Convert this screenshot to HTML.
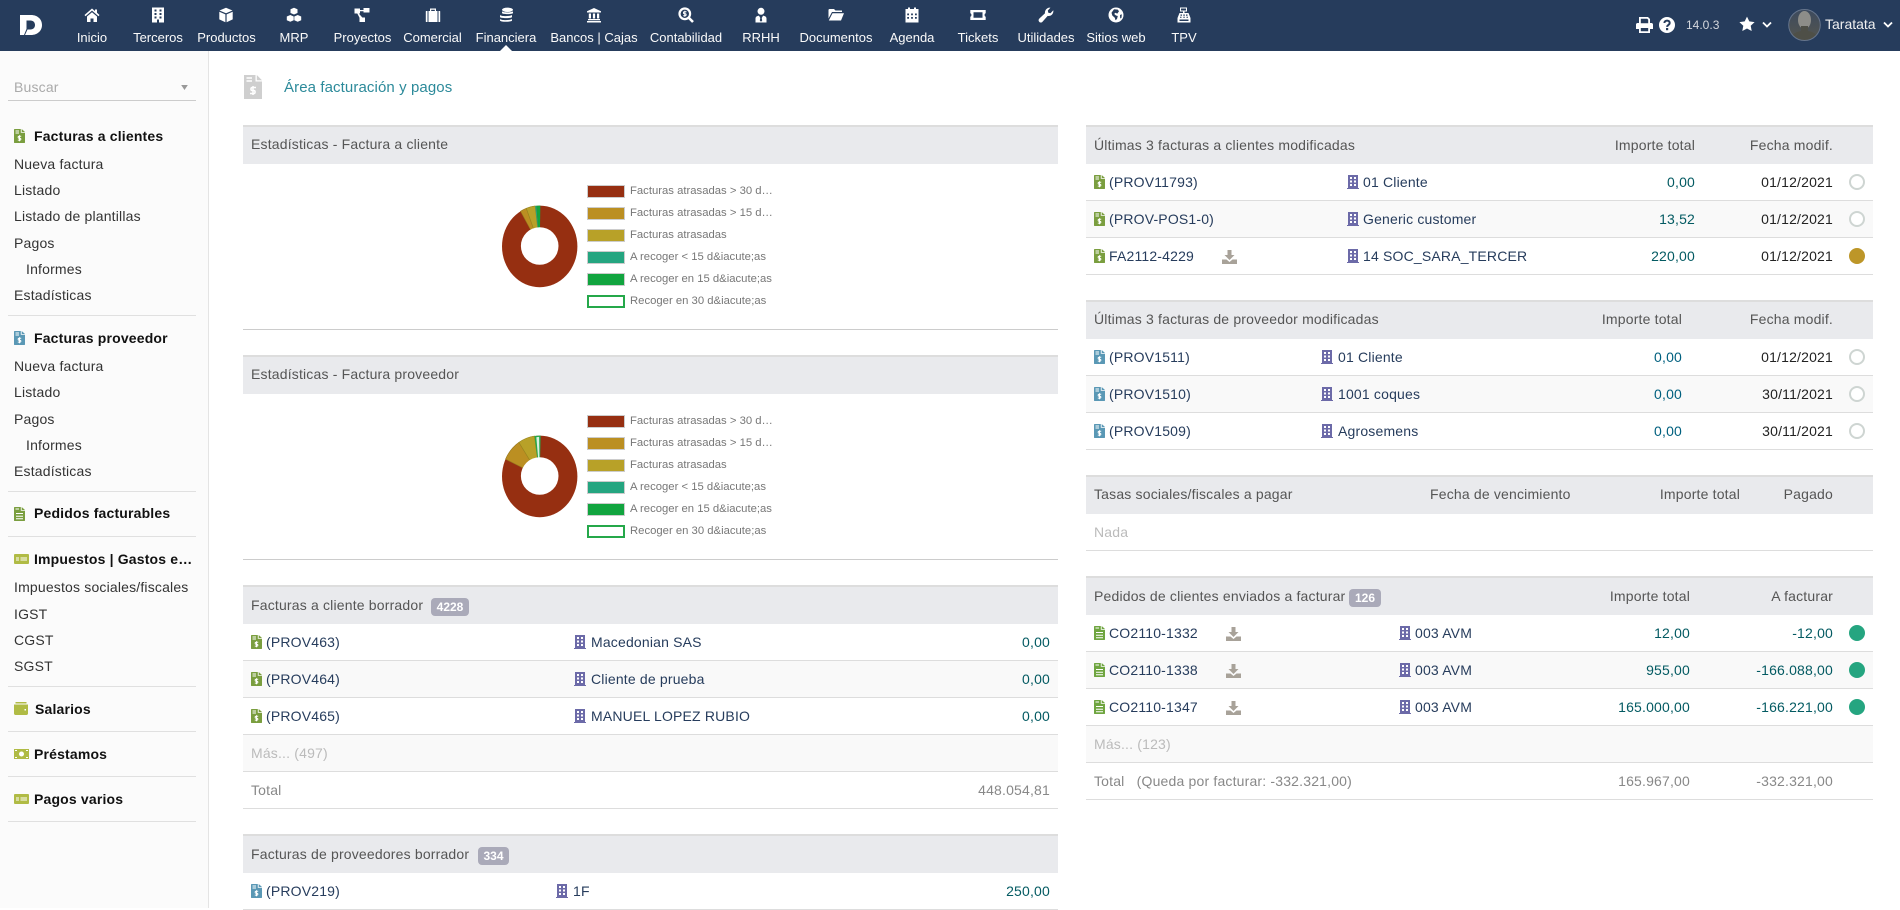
<!DOCTYPE html>
<html lang="es">
<head>
<meta charset="utf-8">
<title>Área facturación y pagos</title>
<style>
html,body{margin:0;padding:0;background:#fff}
body{position:relative;width:1900px;height:908px;overflow:hidden;font-family:"Liberation Sans",Arial,sans-serif;font-size:14px;color:#333}
.a{position:absolute;white-space:nowrap;line-height:20px;letter-spacing:.18px}
svg.a{line-height:0;display:block}
#top{position:absolute;left:0;top:0;width:1900px;height:51px;background:#263c5c}
.n{position:absolute;top:28px;width:110px;text-align:center;font-size:13px;line-height:20px;color:#fafafa;white-space:nowrap}
.ni{position:absolute;top:7px;width:16px;height:16px;fill:#fff}
#side{position:absolute;left:0;top:51px;width:208px;height:857px;background:#fbfbfb;border-right:1px solid #e4e4e4}
.b{font-weight:bold;color:#111;letter-spacing:.17px}
.s{color:#333}
.sl{position:absolute;left:8px;width:188px;height:1px;background:#e0e0e0}
.hd{position:absolute;height:39px;background:#e9eaed;border-top:2px solid #ddd;box-sizing:border-box}
.r{position:absolute;height:37px;border-bottom:1px solid #ddd;box-sizing:border-box;background:#fff}
.alt{background:#f9f9f9}
.L{left:243px;width:815px}
.R{left:1086px;width:787px}
.h{color:#555}
.l{color:#263c5c}
.m{color:#035a62}
.mb{color:#00607f}
.d{color:#222}
.g{color:#bbb}
.t{color:#888}
.bd{position:absolute;height:18px;border-radius:4px;background:#aaaab9;color:#fff;font-weight:bold;font-size:12px;line-height:18px;text-align:center}
.c{position:absolute;width:16px;height:16px;border-radius:50%;box-sizing:border-box}
.c0{border:2px solid #ced5d2;background:#fff}
.c1{background:#bd9628}
.c2{background:#25a580}
.sw{position:absolute;left:587px;width:38px;height:13px;box-sizing:border-box;border:1px solid #ccc}
.lg{font-size:11.3px;color:#777;left:630px;line-height:14px;letter-spacing:0;filter:blur(.25px)}
</style>
</head>
<body>
<svg width="0" height="0" style="position:absolute">
<defs>
<symbol id="inv" viewBox="0 0 11 14"><path d="M0 .8C0 .3.3 0 .8 0H6.8V3.8H11V13.2C11 13.7 10.7 14 10.2 14H.8C.3 14 0 13.7 0 13.2Z"/><path d="M7.7 0 11 3H7.7Z"/><path d="M1.5 2h3.5M1.5 4h3.5" stroke="#fff" stroke-width=".9"/><path d="M7.2 7.3H5C3.9 7.3 3.9 9.2 5 9.2H6C7.1 9.2 7.1 11.1 6 11.1H3.8M5.5 6.2V12.2" fill="none" stroke="#fff" stroke-width="1"/></symbol>
<symbol id="ord" viewBox="0 0 11 14"><path d="M0 .8C0 .3.3 0 .8 0H6.8V3.8H11V13.2C11 13.7 10.7 14 10.2 14H.8C.3 14 0 13.7 0 13.2Z"/><path d="M7.7 0 11 3H7.7Z"/><path d="M1.5 2h3.5M2 6.5h7M2 9.2h7M2 11.8h7" stroke="#fff" stroke-width="1"/></symbol>
<symbol id="co" viewBox="0 0 12 14"><path d="M1 0H11V13H12V14H0V13H1Z"/><path d="M3 2h2v2H3ZM7 2h2v2H7ZM3 5.5h2v2H3ZM7 5.5h2v2H7ZM3 9h2v2H3ZM7 9h2v2H7Z" fill="#fff"/></symbol>
<symbol id="dl" viewBox="0 0 15 14"><path d="M5.5 0H9.5V5H12.5L7.5 10 2.5 5H5.5Z"/><path d="M0 9.5H4.5L7.5 12 10.5 9.5H15V14H0Z"/></symbol>
</defs>
</svg>

<div id="top">
<svg class="a" style="left:20px;top:15px" width="22" height="20" viewBox="0 0 22 20"><path fill="#fff" fill-rule="evenodd" d="M0 0H11C17.5 0 22 4.2 22 10S17.5 20 11 20H5L7.5 14.5H10.5C13.2 14.5 15 12.6 15 10S13.2 5.5 10.5 5.5H6.5V14L4 20H0Z"/></svg>

<svg class="ni" style="left:84px" viewBox="0 0 16 16"><path d="M8 1.5 .5 8l1 1.2L8 3.6l6.5 5.6 1-1.2-2.5-2.2V2.5h-2v1.6ZM3 9.5 8 5.2l5 4.3V15H9.5v-3.5h-3V15H3Z"/></svg>
<svg class="ni" style="left:150px" viewBox="0 0 16 16"><path fill-rule="evenodd" d="M2 .5H14V15.500H2ZM4.500 2.500V4.500H6.500V2.500ZM9.500 2.500V4.500H11.500V2.500ZM4.500 6V8H6.500V6ZM9.500 6V8H11.500V6ZM4.500 9.500V11.500H6.500V9.500ZM9.500 9.500V11.500H11.500V9.500ZM7 12.500V15.500H9V12.500Z"/></svg>
<svg class="ni" style="left:218px" viewBox="0 0 16 16"><path d="M8 .8 14.500 3.500 8 6.300 1.500 3.500ZM1.300 4.800 7.400 7.400V15.200L1.300 12.400ZM14.700 4.800V12.400L8.600 15.200V7.400Z"/></svg>
<svg class="ni" style="left:286px" viewBox="0 0 16 16"><path d="M8 .8 11.500 2.300V6L8 7.500 4.500 6V2.300ZM4.300 8 7.700 9.500V13.300L4.300 14.800.8 13.300V9.500ZM11.700 8 15.200 9.500V13.300L11.700 14.800 8.300 13.300V9.500Z"/></svg>
<svg class="ni" style="left:354px" viewBox="0 0 16 16"><path d="M.5 1.500H6V6.500H4.800L8.300 10.500H11V15H5.500V10.800L3.300 6.500H.5ZM9.500 1H15.500V5.500H9.500ZM6 3H9.500V4.200H6Z"/></svg>
<svg class="ni" style="left:425px" viewBox="0 0 16 16"><path fill-rule="evenodd" d="M5 4V1.500H11V4H12.500V15H3.500V4ZM6.200 2.700V4H9.800V2.700ZM.8 4.500C.8 4.200 1 4 1.300 4H2.500V15H1.300C1 15 .8 14.800 .8 14.500ZM13.500 4H14.700C15 4 15.200 4.200 15.200 4.500V14.500C15.200 14.800 15 15 14.700 15H13.500Z"/></svg>
<svg class="ni" style="left:498px" viewBox="0 0 16 16"><ellipse cx="9.500" cy="2.800" rx="5.500" ry="2.200"/><path d="M4 4.300C5 5.800 14 5.800 15 4.300V6C15 7.500 4 7.500 4 6Z"/><path d="M2 8C3 9.500 12 9.500 14 8V10C14 11.500 2 11.500 2 10Z"/><path d="M2 12C3 13.500 12 13.500 14 12V13.500C14 15.200 2 15.200 2 13.500Z"/></svg>
<svg class="ni" style="left:586px" viewBox="0 0 16 16"><path d="M8 1 15 4.300V5.500H1V4.300ZM2.800 6.500H5V11.500H2.800ZM6.900 6.500H9.100V11.500H6.900ZM11 6.500H13.200V11.500H11ZM2 12H14V13.300H2ZM1 14H15V15.500H1Z"/></svg>
<svg class="ni" style="left:678px" viewBox="0 0 16 16"><circle cx="6.800" cy="6.800" r="5.300" fill="none" stroke="#fff" stroke-width="2.200"/><path d="M11 11 15 15" stroke="#fff" stroke-width="2.600"/><path d="M8.500 4.800H6.300C5.200 4.800 5.200 6.700 6.300 6.700H7.300C8.400 6.700 8.400 8.700 7.300 8.700H5.200M6.800 3.800V9.800" fill="none" stroke="#fff" stroke-width="1"/></svg>
<svg class="ni" style="left:753px" viewBox="0 0 16 16"><circle cx="8" cy="4.300" r="3.500"/><path d="M2.500 15.500V11.500C2.500 9.800 4 8.700 6 8.700L7.300 11 6.800 13.500 8 14.800 9.200 13.500 8.700 11 10 8.700C12 8.700 13.500 9.800 13.500 11.500V15.500Z"/></svg>
<svg class="ni" style="left:828px" viewBox="0 0 16 16"><path d="M.5 3C.5 2.500.9 2 1.500 2H6L7.500 3.500H14V5H4L.5 11.500ZM4.500 6.200H16L13 13.500H.8Z"/></svg>
<svg class="ni" style="left:904px" viewBox="0 0 16 16"><path fill-rule="evenodd" d="M4 .5H6V2H10V.5H12V2H14.500V15.500H1.500V2H4ZM3.200 6.500V8.300H5V6.500ZM7.100 6.500V8.300H8.900V6.500ZM11 6.500V8.300H12.800V6.500ZM3.200 10V11.800H5V10ZM7.100 10V11.800H8.900V10ZM11 10V11.800H12.800V10Z"/></svg>
<svg class="ni" style="left:970px" viewBox="0 0 16 16"><path fill-rule="evenodd" d="M.3 3H15.700V6.300C14.200 6.500 14.200 9.500 15.700 9.700V13H.3V9.700C1.800 9.500 1.800 6.500.3 6.300ZM3.500 5.300V10.700H12.500V5.300Z"/></svg>
<svg class="ni" style="left:1038px" viewBox="0 0 16 16"><path d="M15.300 3.300C15.700 5.500 14.500 8 12.200 8.800 11.300 9.100 10.500 9.100 9.700 8.900L4.500 14.800C3.600 15.800 2 15.800 1.200 14.800.3 13.900.4 12.400 1.400 11.500L7 6.300C6.700 4.600 7.500 2.300 9.500 1.200 10.400.7 11.400.5 12.400.7L9.800 3.500 10.300 5.700 12.500 6.200Z"/></svg>
<svg class="ni" style="left:1108px" viewBox="0 0 16 16"><circle cx="8" cy="8" r="7.500"/><path fill="#263c5c" d="M6 2.300 9.800 2.600 11 4.300 9.300 6.600 7.300 5.800 6.200 7 8 8.500 9.800 9 9 12 7.500 13.300 6.800 10.800 4.300 8.500 3.500 5.700ZM12 8 13.800 7.300 13.500 10.800 12.200 11.500Z"/></svg>
<svg class="ni" style="left:1176px" viewBox="0 0 16 16"><path fill-rule="evenodd" d="M4 .5H11V4.500H8.500V6H12.500L14.500 11V15.500H1.500V11L3.500 6H7V4.500H4ZM5 1.500V3.500H10V1.500ZM4.500 7.500V8.700H6V7.500ZM7.300 7.500V8.700H8.800V7.500ZM10 7.500V8.700H11.500V7.500ZM4 9.700V10.800H5.500V9.700ZM7.300 9.700V10.800H8.800V9.700ZM10.500 9.700V10.800H12V9.700ZM3.500 12.500V14H12.500V12.500Z"/></svg>

<div class="n" style="left:37px">Inicio</div>
<div class="n" style="left:103px">Terceros</div>
<div class="n" style="left:171.500px">Productos</div>
<div class="n" style="left:239px">MRP</div>
<div class="n" style="left:307.500px">Proyectos</div>
<div class="n" style="left:377.500px">Comercial</div>
<div class="n" style="left:451px">Financiera</div>
<div class="n" style="left:539px">Bancos | Cajas</div>
<div class="n" style="left:631px">Contabilidad</div>
<div class="n" style="left:706px">RRHH</div>
<div class="n" style="left:781px">Documentos</div>
<div class="n" style="left:857px">Agenda</div>
<div class="n" style="left:923px">Tickets</div>
<div class="n" style="left:991px">Utilidades</div>
<div class="n" style="left:1061px">Sitios web</div>
<div class="n" style="left:1129px">TPV</div>

<svg class="a" style="left:500px;top:45px" width="12" height="6" viewBox="0 0 12 6"><path d="M0 6 6 0 12 6Z" fill="#fff"/></svg>

<svg class="a" style="left:1636px;top:17px" width="17" height="16" viewBox="0 0 17 16"><path fill="#fff" fill-rule="evenodd" d="M3 0H12L14 2V6H15.500C16.300 6 17 6.700 17 7.500V12H14V16H3V12H0V7.500C0 6.700.7 6 1.500 6H3ZM4.800 1.800V6.200H12.200V2.800L11.200 1.800ZM4.800 11V14.200H12.200V11Z"/></svg>
<svg class="a" style="left:1659px;top:17px" width="16" height="16" viewBox="0 0 16 16"><circle cx="8" cy="8" r="8" fill="#fff"/><path d="M5.400 6C5.500 2.800 10.700 2.800 10.700 6C10.700 8 8.100 7.900 8.100 9.900" fill="none" stroke="#263c5c" stroke-width="2"/><rect x="7" y="11" width="2.200" height="2.200" fill="#263c5c"/></svg>
<div class="a" style="left:1686px;top:15px;font-size:12px;color:#d5d8de;letter-spacing:0">14.0.3</div>
<svg class="a" style="left:1739px;top:16px" width="16" height="16" viewBox="0 0 16 16"><path fill="#fff" d="M8 .6 10.300 5.400 15.600 6.100 11.700 9.800 12.700 15 8 12.500 3.300 15 4.300 9.800.4 6.100 5.700 5.400Z"/></svg>
<svg class="a" style="left:1762px;top:21px" width="10" height="8" viewBox="0 0 10 8"><path d="M1 1.500 5 5.500 9 1.500" fill="none" stroke="#fff" stroke-width="1.800"/></svg>
<svg class="a" style="left:1788px;top:9px" width="33" height="32" viewBox="0 0 33 32"><defs><clipPath id="av"><ellipse cx="16.500" cy="16" rx="15.800" ry="15.500"/></clipPath><linearGradient id="avg" x1="0" y1="0" x2="0" y2="1"><stop offset="0" stop-color="#3c4a5e"/><stop offset="1" stop-color="#55564f"/></linearGradient></defs><g clip-path="url(#av)"><rect width="33" height="32" fill="url(#avg)"/><ellipse cx="16.500" cy="11" rx="6.500" ry="9" fill="#8d8d89"/><path d="M13 17H20V22C25 23 30 25 31 32H2C3 25 8 23 13 22Z" fill="#4e4f47"/></g><ellipse cx="16.500" cy="16" rx="15.800" ry="15.500" fill="none" stroke="#66758c"/></svg>
<div class="a" style="left:1825px;top:14px;font-size:14px;color:#f0f0f0;letter-spacing:0">Taratata</div>
<svg class="a" style="left:1883px;top:21px" width="10" height="8" viewBox="0 0 10 8"><path d="M1 1.500 5 5.500 9 1.500" fill="none" stroke="#fff" stroke-width="1.800"/></svg>
</div>

<div id="side"></div>
<div class="a" style="left:14px;top:77px;color:#aaa">Buscar</div>
<svg class="a" style="left:181px;top:85px" width="7" height="5" viewBox="0 0 8 6"><path d="M0 0H8L4 6Z" fill="#999"/></svg>
<div class="a" style="left:8px;top:100px;width:188px;height:1px;background:#ccc"></div>

<svg class="a" style="left:14px;top:129px;fill:#7a9e3f" width="11" height="14"><use href="#inv"/></svg>
<div class="a b" style="left:34px;top:126px">Facturas a clientes</div>
<div class="a s" style="left:14px;top:154px">Nueva factura</div>
<div class="a s" style="left:14px;top:180px">Listado</div>
<div class="a s" style="left:14px;top:206px">Listado de plantillas</div>
<div class="a s" style="left:14px;top:233px">Pagos</div>
<div class="a s" style="left:26px;top:259px">Informes</div>
<div class="a s" style="left:14px;top:285px">Estadísticas</div>
<div class="sl" style="top:315px"></div>

<svg class="a" style="left:14px;top:331px;fill:#5a98b5" width="11" height="14"><use href="#inv"/></svg>
<div class="a b" style="left:34px;top:328px">Facturas proveedor</div>
<div class="a s" style="left:14px;top:356px">Nueva factura</div>
<div class="a s" style="left:14px;top:382px">Listado</div>
<div class="a s" style="left:14px;top:409px">Pagos</div>
<div class="a s" style="left:26px;top:435px">Informes</div>
<div class="a s" style="left:14px;top:461px">Estadísticas</div>
<div class="sl" style="top:491px"></div>

<svg class="a" style="left:14px;top:507px;fill:#7a9e3f" width="11" height="14"><use href="#ord"/></svg>
<div class="a b" style="left:34px;top:503px">Pedidos facturables</div>
<div class="sl" style="top:536px"></div>

<svg class="a" style="left:14px;top:554px" width="15" height="10" viewBox="0 0 15 10"><rect width="15" height="10" rx="1" fill="#b0bb45"/><path d="M2 4h3M2 6h3M6.500 4H13M6.500 6H13" stroke="#fff" stroke-width="1"/></svg>
<div class="a b" style="left:34px;top:549px">Impuestos | Gastos e…</div>
<div class="a s" style="left:14px;top:577px">Impuestos sociales/fiscales</div>
<div class="a s" style="left:14px;top:604px">IGST</div>
<div class="a s" style="left:14px;top:630px">CGST</div>
<div class="a s" style="left:14px;top:656px">SGST</div>
<div class="sl" style="top:686px"></div>

<svg class="a" style="left:14px;top:702px" width="14" height="13" viewBox="0 0 14 13"><path d="M1.500 0H12.500V1.500H1.500ZM0 2.500H14V11.500C14 12.300 13.300 13 12.500 13H1.500C.7 13 0 12.300 0 11.500Z" fill="#b0bb45"/><rect x="10.500" y="7" width="1.500" height="1.500" fill="#fff"/></svg>
<div class="a b" style="left:35px;top:699px">Salarios</div>
<div class="sl" style="top:731px"></div>

<svg class="a" style="left:14px;top:749px" width="15" height="10" viewBox="0 0 15 10"><rect width="15" height="10" fill="#b0bb45"/><circle cx="7.500" cy="5" r="2.500" fill="#fff"/><path d="M1 1.500H3M12 1.500H14M1 8.500H3M12 8.500H14" stroke="#fff"/></svg>
<div class="a b" style="left:34px;top:744px">Préstamos</div>
<div class="sl" style="top:776px"></div>

<svg class="a" style="left:14px;top:794px" width="15" height="10" viewBox="0 0 15 10"><rect width="15" height="10" rx="1" fill="#b0bb45"/><path d="M2 4h3M2 6h3M6.500 4H13M6.500 6H13" stroke="#fff" stroke-width="1"/></svg>
<div class="a b" style="left:34px;top:789px">Pagos varios</div>
<div class="sl" style="top:821px"></div>

<svg class="a" style="left:244px;top:75px" width="18" height="24" viewBox="0 0 18 24"><path fill="#cfcfcf" d="M0 0H11.500V6.500H18V24H0Z"/><path fill="#cfcfcf" d="M12.800 0 18 5.200H12.800Z"/><path d="M2.500 3H8M2.500 6H8" stroke="#fff" stroke-width="1.500"/><path d="M12 12.500H8.300C6.500 12.500 6.500 15.500 8.300 15.500H9.800C11.500 15.500 11.500 18.500 9.800 18.500H6M9 11V20" fill="none" stroke="#fff" stroke-width="1.500"/></svg>
<div class="a" style="left:284px;top:78px;font-size:15px;color:#2c8a9a;letter-spacing:.1px">Área facturación y pagos</div>

<!-- LEFT 1 -->
<div class="hd L" style="top:125px"></div>
<div class="a h" style="left:251px;top:134px">Estadísticas - Factura a cliente</div>
<div class="a L" style="top:329px;height:1px;background:#ccc"></div>
<svg class="a" style="left:480px;top:170px" width="160" height="140" viewBox="480 170 160 140">
<g transform="translate(539.700 246.400) scale(37.700 40.800)">
<circle r="1" fill="#962f11"/>
<path d="M0 0L-.509 -.861A1 1 0 0 1 -.355 -.935Z" fill="#bb8f22" stroke="#97781f" stroke-width=".6" vector-effect="non-scaling-stroke"/>
<path d="M0 0L-.355 -.935A1 1 0 0 1 -.122 -.9925Z" fill="#b8a128" stroke="#97851f" stroke-width=".6" vector-effect="non-scaling-stroke"/>
<path d="M0 0L-.122 -.9925A1 1 0 0 1 -.087 -.996Z" fill="#25a580"/>
<path d="M0 0L-.087 -.996A1 1 0 0 1 .0175 -.9998Z" fill="#12a53e"/>
</g>
<circle cx="539.700" cy="246" r="18.800" fill="#fff"/>
</svg>
<div class="sw" style="top:185px;background:#962f11"></div>
<div class="sw" style="top:207px;background:#bb8f22"></div>
<div class="sw" style="top:229px;background:#b8a128"></div>
<div class="sw" style="top:251px;background:#25a580"></div>
<div class="sw" style="top:273px;background:#11a43f"></div>
<div class="sw" style="top:295px;background:#fff;border:2px solid #25a84a"></div>
<div class="a lg" style="top:184px">Facturas atrasadas &gt; 30 d…</div>
<div class="a lg" style="top:206px">Facturas atrasadas &gt; 15 d…</div>
<div class="a lg" style="top:228px">Facturas atrasadas</div>
<div class="a lg" style="top:250px">A recoger &lt; 15 d&amp;iacute;as</div>
<div class="a lg" style="top:272px">A recoger en 15 d&amp;iacute;as</div>
<div class="a lg" style="top:294px">Recoger en 30 d&amp;iacute;as</div>

<!-- LEFT 2 -->
<div class="hd L" style="top:355px"></div>
<div class="a h" style="left:251px;top:364px">Estadísticas - Factura proveedor</div>
<div class="a L" style="top:559px;height:1px;background:#ccc"></div>
<svg class="a" style="left:480px;top:400px" width="160" height="140" viewBox="480 400 160 140">
<g transform="translate(539.700 476.400) scale(37.700 40.800)">
<circle r="1" fill="#962f11"/>
<path d="M0 0L-.906 -.423A1 1 0 0 1 -.552 -.834Z" fill="#bb8f22" stroke="#97781f" stroke-width=".6" vector-effect="non-scaling-stroke"/>
<path d="M0 0L-.552 -.834A1 1 0 0 1 -.139 -.990Z" fill="#b8a128" stroke="#97851f" stroke-width=".6" vector-effect="non-scaling-stroke"/>
<path d="M0 0L-.139 -.990A1 1 0 0 1 .026 -.9997Z" fill="#25a84a"/>
<path d="M0 0L-.09 -.96A1 1 0 0 1 -.015 -.97Z" fill="#d8efdf"/>
</g>
<circle cx="539.700" cy="476" r="18.800" fill="#fff"/>
</svg>
<div class="sw" style="top:415px;background:#962f11"></div>
<div class="sw" style="top:437px;background:#bb8f22"></div>
<div class="sw" style="top:459px;background:#b8a128"></div>
<div class="sw" style="top:481px;background:#25a580"></div>
<div class="sw" style="top:503px;background:#11a43f"></div>
<div class="sw" style="top:525px;background:#fff;border:2px solid #25a84a"></div>
<div class="a lg" style="top:414px">Facturas atrasadas &gt; 30 d…</div>
<div class="a lg" style="top:436px">Facturas atrasadas &gt; 15 d…</div>
<div class="a lg" style="top:458px">Facturas atrasadas</div>
<div class="a lg" style="top:480px">A recoger &lt; 15 d&amp;iacute;as</div>
<div class="a lg" style="top:502px">A recoger en 15 d&amp;iacute;as</div>
<div class="a lg" style="top:524px">Recoger en 30 d&amp;iacute;as</div>

<!-- LEFT 3 -->
<div class="hd L" style="top:585px"></div>
<div class="a h" style="left:251px;top:595px">Facturas a cliente borrador</div>
<div class="bd" style="left:431px;top:598px;width:38px">4228</div>
<div class="r L" style="top:624px"></div>
<div class="r L alt" style="top:661px"></div>
<div class="r L" style="top:698px"></div>
<div class="r L alt" style="top:735px"></div>
<div class="r L" style="top:772px"></div>
<svg class="a" style="left:251px;top:635px;fill:#7a9e3f" width="11" height="14"><use href="#inv"/></svg>
<svg class="a" style="left:251px;top:672px;fill:#7a9e3f" width="11" height="14"><use href="#inv"/></svg>
<svg class="a" style="left:251px;top:709px;fill:#7a9e3f" width="11" height="14"><use href="#inv"/></svg>
<div class="a l" style="left:266px;top:632px">(PROV463)</div>
<div class="a l" style="left:266px;top:669px">(PROV464)</div>
<div class="a l" style="left:266px;top:706px">(PROV465)</div>
<svg class="a" style="left:574px;top:635px;fill:#6c6aa8" width="12" height="14"><use href="#co"/></svg>
<svg class="a" style="left:574px;top:672px;fill:#6c6aa8" width="12" height="14"><use href="#co"/></svg>
<svg class="a" style="left:574px;top:709px;fill:#6c6aa8" width="12" height="14"><use href="#co"/></svg>
<div class="a l" style="left:591px;top:632px">Macedonian SAS</div>
<div class="a l" style="left:591px;top:669px">Cliente de prueba</div>
<div class="a l" style="left:591px;top:706px">MANUEL LOPEZ RUBIO</div>
<div class="a m" style="right:850px;top:632px">0,00</div>
<div class="a m" style="right:850px;top:669px">0,00</div>
<div class="a m" style="right:850px;top:706px">0,00</div>
<div class="a g" style="left:251px;top:743px">Más... (497)</div>
<div class="a t" style="left:251px;top:780px">Total</div>
<div class="a t" style="right:850px;top:780px">448.054,81</div>

<!-- LEFT 4 -->
<div class="hd L" style="top:834px"></div>
<div class="a h" style="left:251px;top:844px">Facturas de proveedores borrador</div>
<div class="bd" style="left:478px;top:847px;width:31px">334</div>
<div class="r L" style="top:873px"></div>
<svg class="a" style="left:251px;top:884px;fill:#5a98b5" width="11" height="14"><use href="#inv"/></svg>
<div class="a l" style="left:266px;top:881px">(PROV219)</div>
<svg class="a" style="left:556px;top:884px;fill:#6c6aa8" width="12" height="14"><use href="#co"/></svg>
<div class="a l" style="left:573px;top:881px">1F</div>
<div class="a m" style="right:850px;top:881px">250,00</div>

<!-- RIGHT 1 -->
<div class="hd R" style="top:125px"></div>
<div class="a h" style="left:1094px;top:135px">Últimas 3 facturas a clientes modificadas</div>
<div class="a h" style="right:205px;top:135px">Importe total</div>
<div class="a h" style="right:67px;top:135px">Fecha modif.</div>
<div class="r R" style="top:164px"></div>
<div class="r R alt" style="top:201px"></div>
<div class="r R" style="top:238px"></div>
<svg class="a" style="left:1094px;top:175px;fill:#7a9e3f" width="11" height="14"><use href="#inv"/></svg>
<svg class="a" style="left:1094px;top:212px;fill:#7a9e3f" width="11" height="14"><use href="#inv"/></svg>
<svg class="a" style="left:1094px;top:249px;fill:#7a9e3f" width="11" height="14"><use href="#inv"/></svg>
<div class="a l" style="left:1109px;top:172px">(PROV11793)</div>
<div class="a l" style="left:1109px;top:209px">(PROV-POS1-0)</div>
<div class="a l" style="left:1109px;top:246px">FA2112-4229</div>
<svg class="a" style="left:1222px;top:250px;fill:#a8a299" width="15" height="14"><use href="#dl"/></svg>
<svg class="a" style="left:1347px;top:175px;fill:#6c6aa8" width="12" height="14"><use href="#co"/></svg>
<svg class="a" style="left:1347px;top:212px;fill:#6c6aa8" width="12" height="14"><use href="#co"/></svg>
<svg class="a" style="left:1347px;top:249px;fill:#6c6aa8" width="12" height="14"><use href="#co"/></svg>
<div class="a l" style="left:1363px;top:172px">01 Cliente</div>
<div class="a l" style="left:1363px;top:209px">Generic customer</div>
<div class="a l" style="left:1363px;top:246px">14 SOC_SARA_TERCER</div>
<div class="a m" style="right:205px;top:172px">0,00</div>
<div class="a m" style="right:205px;top:209px">13,52</div>
<div class="a m" style="right:205px;top:246px">220,00</div>
<div class="a d" style="right:67px;top:172px">01/12/2021</div>
<div class="a d" style="right:67px;top:209px">01/12/2021</div>
<div class="a d" style="right:67px;top:246px">01/12/2021</div>
<div class="c c0" style="left:1849px;top:174px"></div>
<div class="c c0" style="left:1849px;top:211px"></div>
<div class="c c1" style="left:1849px;top:248px"></div>

<!-- RIGHT 2 -->
<div class="hd R" style="top:300px"></div>
<div class="a h" style="left:1094px;top:309px">Últimas 3 facturas de proveedor modificadas</div>
<div class="a h" style="right:218px;top:309px">Importe total</div>
<div class="a h" style="right:67px;top:309px">Fecha modif.</div>
<div class="r R" style="top:339px"></div>
<div class="r R alt" style="top:376px"></div>
<div class="r R" style="top:413px"></div>
<svg class="a" style="left:1094px;top:350px;fill:#5a98b5" width="11" height="14"><use href="#inv"/></svg>
<svg class="a" style="left:1094px;top:387px;fill:#5a98b5" width="11" height="14"><use href="#inv"/></svg>
<svg class="a" style="left:1094px;top:424px;fill:#5a98b5" width="11" height="14"><use href="#inv"/></svg>
<div class="a l" style="left:1109px;top:347px">(PROV1511)</div>
<div class="a l" style="left:1109px;top:384px">(PROV1510)</div>
<div class="a l" style="left:1109px;top:421px">(PROV1509)</div>
<svg class="a" style="left:1321px;top:350px;fill:#6c6aa8" width="12" height="14"><use href="#co"/></svg>
<svg class="a" style="left:1321px;top:387px;fill:#6c6aa8" width="12" height="14"><use href="#co"/></svg>
<svg class="a" style="left:1321px;top:424px;fill:#6c6aa8" width="12" height="14"><use href="#co"/></svg>
<div class="a l" style="left:1338px;top:347px">01 Cliente</div>
<div class="a l" style="left:1338px;top:384px">1001 coques</div>
<div class="a l" style="left:1338px;top:421px">Agrosemens</div>
<div class="a mb" style="right:218px;top:347px">0,00</div>
<div class="a mb" style="right:218px;top:384px">0,00</div>
<div class="a mb" style="right:218px;top:421px">0,00</div>
<div class="a d" style="right:67px;top:347px">01/12/2021</div>
<div class="a d" style="right:67px;top:384px">30/11/2021</div>
<div class="a d" style="right:67px;top:421px">30/11/2021</div>
<div class="c c0" style="left:1849px;top:349px"></div>
<div class="c c0" style="left:1849px;top:386px"></div>
<div class="c c0" style="left:1849px;top:423px"></div>

<!-- RIGHT 3 -->
<div class="hd R" style="top:475px"></div>
<div class="a h" style="left:1094px;top:484px">Tasas sociales/fiscales a pagar</div>
<div class="a h" style="left:1430px;top:484px">Fecha de vencimiento</div>
<div class="a h" style="right:160px;top:484px">Importe total</div>
<div class="a h" style="right:67px;top:484px">Pagado</div>
<div class="r R" style="top:514px"></div>
<div class="a g" style="left:1094px;top:522px">Nada</div>

<!-- RIGHT 4 -->
<div class="hd R" style="top:576px"></div>
<div class="a h" style="left:1094px;top:586px">Pedidos de clientes enviados a facturar</div>
<div class="bd" style="left:1349px;top:589px;width:32px">126</div>
<div class="a h" style="right:210px;top:586px">Importe total</div>
<div class="a h" style="right:67px;top:586px">A facturar</div>
<div class="r R" style="top:615px"></div>
<div class="r R alt" style="top:652px"></div>
<div class="r R" style="top:689px"></div>
<div class="r R alt" style="top:726px"></div>
<div class="r R" style="top:763px"></div>
<svg class="a" style="left:1094px;top:626px;fill:#6fa540" width="11" height="14"><use href="#ord"/></svg>
<svg class="a" style="left:1094px;top:663px;fill:#6fa540" width="11" height="14"><use href="#ord"/></svg>
<svg class="a" style="left:1094px;top:700px;fill:#6fa540" width="11" height="14"><use href="#ord"/></svg>
<div class="a l" style="left:1109px;top:623px">CO2110-1332</div>
<div class="a l" style="left:1109px;top:660px">CO2110-1338</div>
<div class="a l" style="left:1109px;top:697px">CO2110-1347</div>
<svg class="a" style="left:1226px;top:627px;fill:#a8a299" width="15" height="14"><use href="#dl"/></svg>
<svg class="a" style="left:1226px;top:664px;fill:#a8a299" width="15" height="14"><use href="#dl"/></svg>
<svg class="a" style="left:1226px;top:701px;fill:#a8a299" width="15" height="14"><use href="#dl"/></svg>
<svg class="a" style="left:1399px;top:626px;fill:#6c6aa8" width="12" height="14"><use href="#co"/></svg>
<svg class="a" style="left:1399px;top:663px;fill:#6c6aa8" width="12" height="14"><use href="#co"/></svg>
<svg class="a" style="left:1399px;top:700px;fill:#6c6aa8" width="12" height="14"><use href="#co"/></svg>
<div class="a l" style="left:1415px;top:623px">003 AVM</div>
<div class="a l" style="left:1415px;top:660px">003 AVM</div>
<div class="a l" style="left:1415px;top:697px">003 AVM</div>
<div class="a m" style="right:210px;top:623px">12,00</div>
<div class="a m" style="right:210px;top:660px">955,00</div>
<div class="a m" style="right:210px;top:697px">165.000,00</div>
<div class="a m" style="right:67px;top:623px">-12,00</div>
<div class="a m" style="right:67px;top:660px">-166.088,00</div>
<div class="a m" style="right:67px;top:697px">-166.221,00</div>
<div class="c c2" style="left:1849px;top:625px"></div>
<div class="c c2" style="left:1849px;top:662px"></div>
<div class="c c2" style="left:1849px;top:699px"></div>
<div class="a g" style="left:1094px;top:734px">Más... (123)</div>
<div class="a t" style="left:1094px;top:771px">Total &nbsp; (Queda por facturar: -332.321,00)</div>
<div class="a t" style="right:210px;top:771px">165.967,00</div>
<div class="a t" style="right:67px;top:771px">-332.321,00</div>
</body>
</html>
